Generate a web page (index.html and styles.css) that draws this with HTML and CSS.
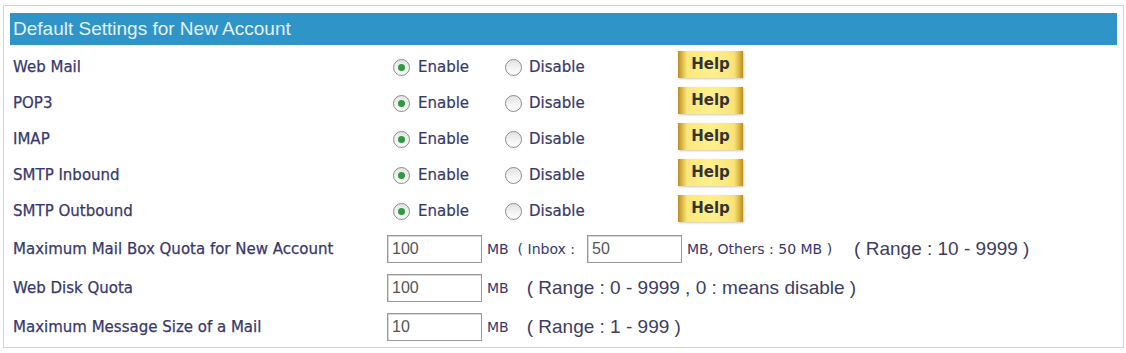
FILE: index.html
```html
<!DOCTYPE html>
<html lang="en">
<head>
    <meta charset="UTF-8">
    <title>Default Settings for New Account</title>
    <link rel="stylesheet" href="styles.css">
</head>
<body>
    <div class="panel">
        <div class="panel-title">Default Settings for New Account</div>

        <div class="row">
            <div class="label">Web Mail</div>
            <div class="ctrl">
                <span class="opt opt-on"><span class="radio checked"></span>Enable</span>
                <span class="opt opt-off"><span class="radio"></span>Disable</span>
                <span class="help">Help</span>
            </div>
        </div>
        <div class="row">
            <div class="label">POP3</div>
            <div class="ctrl">
                <span class="opt opt-on"><span class="radio checked"></span>Enable</span>
                <span class="opt opt-off"><span class="radio"></span>Disable</span>
                <span class="help">Help</span>
            </div>
        </div>
        <div class="row">
            <div class="label">IMAP</div>
            <div class="ctrl">
                <span class="opt opt-on"><span class="radio checked"></span>Enable</span>
                <span class="opt opt-off"><span class="radio"></span>Disable</span>
                <span class="help">Help</span>
            </div>
        </div>
        <div class="row">
            <div class="label">SMTP Inbound</div>
            <div class="ctrl">
                <span class="opt opt-on"><span class="radio checked"></span>Enable</span>
                <span class="opt opt-off"><span class="radio"></span>Disable</span>
                <span class="help">Help</span>
            </div>
        </div>
        <div class="row">
            <div class="label">SMTP Outbound</div>
            <div class="ctrl">
                <span class="opt opt-on"><span class="radio checked"></span>Enable</span>
                <span class="opt opt-off"><span class="radio"></span>Disable</span>
                <span class="help">Help</span>
            </div>
        </div>

        <div class="row row-field">
            <div class="label">Maximum Mail Box Quota for New Account</div>
            <div class="ctrl">
                <input class="box" type="text" value="100">
                <span class="unit unit-inbox">MB &nbsp;( Inbox :</span>
                <input class="box" type="text" value="50">
                <span class="unit">MB, Others : 50 MB )</span>
                <span class="range range-wide">( Range : 10 - 9999 )</span>
            </div>
        </div>
        <div class="row row-field">
            <div class="label">Web Disk Quota</div>
            <div class="ctrl">
                <input class="box" type="text" value="100">
                <span class="unit">MB</span>
                <span class="range">( Range : 0 - 9999 , 0 : means disable )</span>
            </div>
        </div>
        <div class="row row-field">
            <div class="label">Maximum Message Size of a Mail</div>
            <div class="ctrl">
                <input class="box" type="text" value="10">
                <span class="unit">MB</span>
                <span class="range">( Range : 1 - 999 )</span>
            </div>
        </div>
    </div>
</body>
</html>
```

FILE: styles.css
```css
body {
    margin: 5px 2px 0 3px;
    font-family: "DejaVu Sans", Verdana, sans-serif;
    background: #fff;
}
.panel {
    border: 1px solid #d4d4d4;
    padding: 7px 6px 1px 6px;
}
.panel-title {
    height: 32px;
    line-height: 32px;
    padding-left: 3px;
    background-color: #2f95c9;
    color: #e2f2fa;
    font-family: "Liberation Sans", Arial, sans-serif;
    font-size: 19px;
    margin-bottom: 4px;
}
.row {
    display: flex;
    align-items: center;
    height: 36px;
}
.row-field {
    height: 39px;
}
.label {
    width: 374px;
    padding-left: 3px;
    font-size: 15px;
    color: #38386a;
    -webkit-text-stroke: 0.25px #38386a;
    flex-shrink: 0;
}
.ctrl {
    display: flex;
    align-items: center;
    font-size: 15px;
    color: #38386a;
}
.opt {
    display: flex;
    align-items: center;
    -webkit-text-stroke: 0.2px #38386a;
}
.opt-on {
    width: 112px;
    margin-left: 6px;
}
.opt-off {
    width: 173px;
}
.radio {
    box-sizing: border-box;
    width: 17px;
    height: 17px;
    border: 1px solid #8c8c8c;
    border-radius: 50%;
    background: linear-gradient(#e4e4e4, #ffffff);
    margin-right: 8px;
    display: flex;
    align-items: center;
    justify-content: center;
}
.opt-off .radio {
    margin-right: 7px;
}
.radio.checked::after {
    content: "";
    width: 7px;
    height: 7px;
    border-radius: 50%;
    background: #2e9a3e;
}
.help {
    box-sizing: border-box;
    width: 65px;
    height: 27px;
    line-height: 27px;
    margin-bottom: 6px;
    text-align: center;
    font-weight: bold;
    font-size: 15px;
    color: #333;
    background: linear-gradient(to right, #b88e22 0, #d9b544 4px, #fbe77c 9px, #fff08c 50%, #fbe378 calc(100% - 9px), #dcb841 calc(100% - 4px), #b88e22 100%);
    box-shadow: 1px 1px 2px rgba(120, 90, 0, 0.35);
}
.box {
    box-sizing: border-box;
    width: 95px;
    height: 28px;
    padding: 0 4px;
    border: 1px solid #9a9a9a;
    box-shadow: inset 1px 1px 0 #d6d6d6;
    font-family: "Liberation Sans", Arial, sans-serif;
    font-size: 16px;
    color: #555;
    outline: none;
}
.unit {
    font-size: 14px;
    margin: 0 5px;
}
.unit-inbox {
    width: 95px;
}
.range {
    font-family: "Liberation Sans", Arial, sans-serif;
    font-size: 19px;
    color: #3d3d62;
    margin-left: 13px;
}
.range-wide {
    margin-left: 17px;
}
```
